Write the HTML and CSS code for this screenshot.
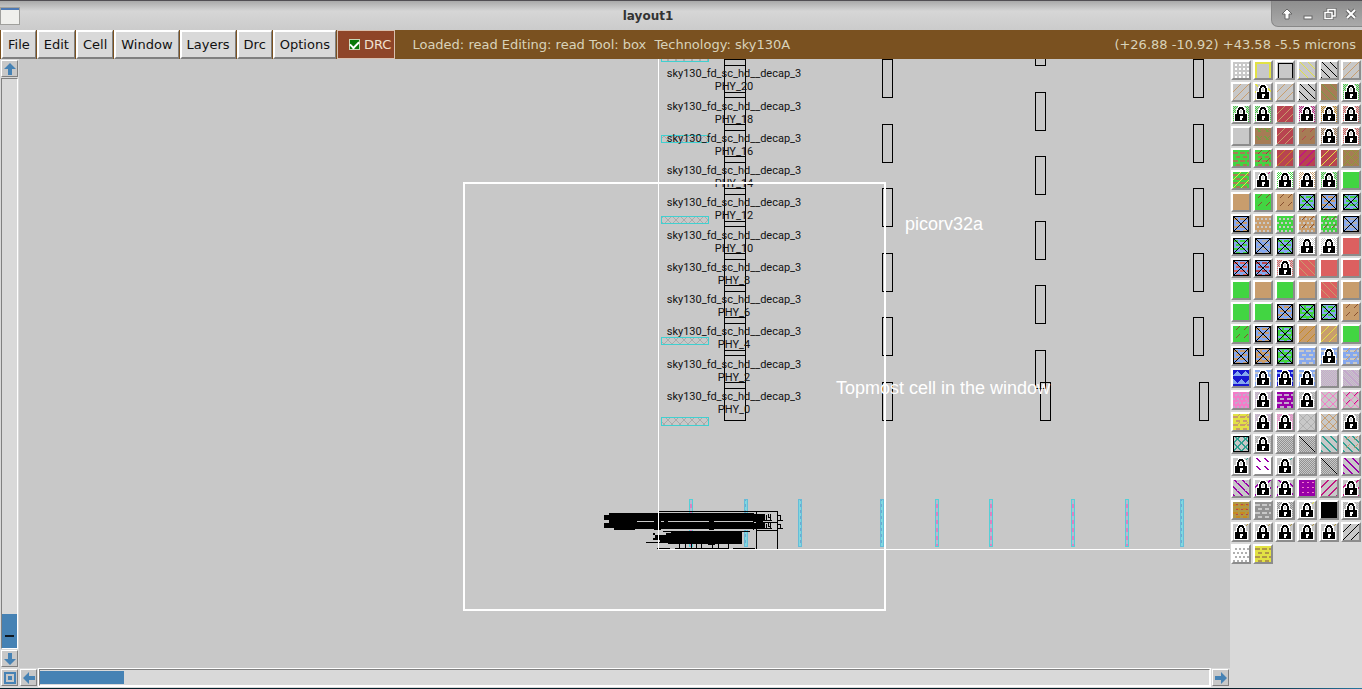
FILE: index.html
```html
<!DOCTYPE html>
<html lang="en">
<head>
<meta charset="utf-8">
<title>layout1</title>
<link rel="stylesheet" href="styles.css">
</head>
<body>
<div class="app">
  <header class="titlebar">
    <svg class="win-icon" width="20" height="18" viewBox="0 0 20 18"><rect x="0" y="0" width="20" height="18" fill="#a0a09c"/><rect x="1" y="1" width="18" height="16" fill="#f0f0ec"/><rect x="1" y="1" width="18" height="2" fill="#4d79b5"/></svg>
    <h1 class="title">layout1</h1>
    <div class="win-controls">
      <button class="win-btn" aria-label="Shade"><svg width="14" height="14" viewBox="0 0 14 14"><path d="M7 2L12 7H9V12H5V7H2Z" fill="#fff" stroke="#666"/></svg></button>
      <button class="win-btn" aria-label="Minimize"><svg width="14" height="14" viewBox="0 0 14 14"><rect x="3" y="9" width="8" height="3" fill="#fff" stroke="#666"/></svg></button>
      <button class="win-btn" aria-label="Restore"><svg width="14" height="14" viewBox="0 0 14 14" fill="none"><path d="M5 5V2.500H12V9H9M2 5.500H9V11.500H2Z" stroke="#666" stroke-width="3"/><path d="M5 5V2.500H12V9H9M2 5.500H9V11.500H2Z" stroke="#fff" stroke-width="1.500"/></svg></button>
      <button class="win-btn" aria-label="Close"><svg width="14" height="14" viewBox="0 0 14 14"><path d="M3 3L11 11M11 3L3 11" stroke="#666" stroke-width="4"/><path d="M3 3L11 11M11 3L3 11" stroke="#fff" stroke-width="2"/></svg></button>
    </div>
  </header>
  <nav class="menubar">
    <button class="menu">File</button><button class="menu">Edit</button><button class="menu">Cell</button><button class="menu">Window</button><button class="menu">Layers</button><button class="menu">Drc</button><button class="menu">Options</button>
    <label class="drc"><input class="drc-box" type="checkbox" checked>DRC</label>
    <span class="status">Loaded: read Editing: read Tool: box&nbsp; Technology: sky130A</span>
    <span class="coords">(+26.88 -10.92) +43.58 -5.5 microns</span>
  </nav>
  <div class="work">
    <div class="vscroll">
      <button class="arrow" aria-label="Scroll up"><svg width="14" height="14" viewBox="0 0 14 14"><path d="M7 1L13 7H9V13H5V7H1Z" fill="#4682b4"/></svg></button>
      <div class="vtrough"><div class="vthumb"></div></div>
      <button class="arrow" aria-label="Scroll down"><svg width="14" height="14" viewBox="0 0 14 14"><path d="M7 13L13 7H9V1H5V7H1Z" fill="#4682b4"/></svg></button>
    </div>
    <svg class="canvas" id="canvas" aria-label="Layout view"></svg>
    <div class="hscroll">
      <button class="arrow" aria-label="Zoom to fit"><svg width="14" height="14" viewBox="0 0 14 14" fill="none" stroke="#4682b4" stroke-width="2"><path d="M2 2H12V12H2Z"/><path d="M6 6H8V8H6Z"/></svg></button>
      <button class="arrow" aria-label="Scroll left"><svg width="14" height="14" viewBox="0 0 14 14"><path d="M1 7L7 1V5H13V9H7V13Z" fill="#4682b4"/></svg></button>
      <div class="htrough"><div class="hthumb"></div></div>
      <button class="arrow" aria-label="Scroll right"><svg width="14" height="14" viewBox="0 0 14 14"><path d="M13 7L7 1V5H1V9H7V13Z" fill="#4682b4"/></svg></button>
    </div>
    <aside class="palette" id="palette"></aside>
  </div>
  <div class="desktop-edge"></div>
</div>
<script src="app.js"></script>
</body>
</html>
```
FILE: styles.css
```css
* { box-sizing: border-box; }
body { margin: 0; background: #d9d9d9; }
button { margin: 0; padding: 0; font: inherit; color: inherit; }
.app {
  display: grid;
  grid-template-rows: 30px 29px 1fr 1px;
  min-height: 100vh;
  font: 13px "DejaVu Sans", sans-serif;
  color: #111;
}
.titlebar {
  display: grid;
  grid-template-columns: 25px 1fr 91px;
  align-items: center;
  border-top: 1px solid #514e53;
  background: linear-gradient(#a9a9a9, #d6d6d6 35%, #cbcbcb);
}
.win-icon { display: block; }
.title {
  margin: 0;
  text-align: center;
  font: bold 12px "DejaVu Sans", sans-serif;
  color: #333;
}
.win-controls {
  display: flex;
  align-items: center;
  align-self: start;
  justify-content: space-around;
  height: 26px;
  padding-left: 4px;
  border: 1px solid #888;
  border-width: 0 0 1px 1px;
  border-bottom-left-radius: 7px;
  background: linear-gradient(#8e8e8e, #aaa);
}
.win-btn { display: flex; border: 0; background: none; }
.menubar {
  display: flex;
  gap: 1px;
  padding-left: 1px;
  background: #7a5120;
  color: #d9d3ba;
  white-space: nowrap;
}
.menu {
  padding: 0 5px 1px;
  border: 2px solid;
  border-color: #fff #808080 #808080 #fff;
  border-right-width: 1px;
  background: #d9d9d9;
  color: #111;
}
.drc {
  display: flex;
  align-items: center;
  gap: 4px;
  padding: 0 3px 1px 11px;
  border: 1px solid #d8c0b0;
  background: #8f4528;
  color: #f0e0d0;
}
.drc-box {
  appearance: none;
  width: 11px;
  height: 11px;
  margin: 0;
  border: 1px solid #c8d8b8;
  background: #087808;
  display: grid;
  place-items: center;
}
.drc-box::before {
  content: "";
  width: 7px;
  height: 4px;
  border: solid #fff;
  border-width: 0 0 2px 2px;
  transform: rotate(-45deg);
}
.status { align-self: center; padding: 0 0 1px 16px; }
.coords { align-self: center; margin-left: auto; padding: 0 6px 1px 0; }
.work {
  display: grid;
  grid-template-columns: 19px 1fr 132px;
  grid-template-rows: 1fr 20px;
}
.vscroll { display: flex; flex-direction: column; gap: 1px; padding: 1px; }
.arrow {
  display: grid;
  place-items: center;
  flex: none;
  width: 17px;
  height: 17px;
  border: 1px solid;
  border-color: #fff #808080 #808080 #fff;
  background: #c8c8c8;
}
.vtrough {
  flex: 1;
  display: flex;
  flex-direction: column;
  justify-content: flex-end;
  border: 1px solid;
  border-color: #808080 #fff #fff #808080;
}
.vthumb {
  height: 6%;
  background: linear-gradient(#101820, #101820) 50% 67% / 9px 2px no-repeat #4682b4;
}
.canvas { grid-area: 1 / 2; width: 100%; height: 100%; background: #c8c8c8; }
.hscroll { grid-area: 2 / 1 / 3 / 3; display: flex; gap: 2px; padding: 1px; }
.htrough {
  flex: 1;
  height: 17px;
  padding-top: 1px;
  border: 1px solid;
  border-color: #808080 #fff #fff #808080;
  outline: 1px solid #fff;
}
.hthumb { width: 84px; height: 13px; background: #4682b4; }
.palette {
  grid-area: 1 / 3 / 3 / 4;
  display: grid;
  grid-template-columns: repeat(6, 20px);
  grid-auto-rows: 20px;
  gap: 2px;
  padding: 1px;
}
.swatch {
  display: grid;
  place-items: center;
  border: 2px solid;
  border-color: #fff #8c8c8c #8c8c8c #fff;
  background: #d0d0d0;
}
.swatch svg { display: block; }
.cell-name { font: 11px Roboto, sans-serif; fill: #111; text-anchor: middle; }
.note { font: 18px "Liberation Sans", Arial, sans-serif; fill: #fff; }
.cell { fill: none; stroke: #000; }
.strap-h { fill: url(#hatch); stroke: #40d0d0; }
.strap-pink { fill: url(#pins); stroke: #55d0d8; }
.strap-blue { fill: url(#bluepins); stroke: #66bcd8; }
.desktop-edge { background: linear-gradient(90deg, #06222c, #061820 90%, #2878a0); }
```
FILE: app.js
```js
// Layout drawing, in window coordinates shifted to the canvas origin.
const straps = [691, 746, 800, 882, 937, 991, 1073, 1127, 1182];
const pinkStraps = [691, 937, 991, 1073, 1127];
let out = `<defs>
<pattern id="hatch" width="8" height="8" patternUnits="userSpaceOnUse"><path d="M0 0L8 8M8 0L0 8" stroke="#aaa"/></pattern>
<pattern id="pins" width="4" height="8" patternUnits="userSpaceOnUse"><rect width="4" height="8" fill="#b8b8d0"/><rect width="4" height="4" fill="#e080c0"/></pattern>
<pattern id="bluepins" width="4" height="6" patternUnits="userSpaceOnUse"><rect width="4" height="6" fill="#80d8e0"/><rect width="2" height="3" fill="#70a8d0"/></pattern>
</defs><g transform="translate(-19 -59)" shape-rendering="crispEdges">`;
for (const y of [54, 135, 216, 337, 417])
  out += `<rect class="strap-h" x="661.5" y="${y + 0.5}" width="47" height="${y === 417 ? 8 : 7}"/>`;
for (const x of straps)
  out += `<rect class="${pinkStraps.includes(x) ? "strap-pink" : "strap-blue"}" x="${x - 1.5}" y="499.5" width="3" height="47"/>`;
const cell = (x, y, w) => `<rect class="cell" x="${x + 0.5}" y="${Math.round(y) + 0.5}" width="${w}" height="38"/>`;
const pitch = 32.27;
for (let i = 0; i < 12; i++) {
  const y = 382 - i * pitch;
  out += cell(724, y, 21);
  if (i < 11)
    out += `<text class="cell-name" x="734" y="${Math.round(y + 18)}">sky130_fd_sc_hd__decap_3</text><text class="cell-name" x="734" y="${Math.round(y + 31)}">PHY_${i * 2}</text>`;
  if (i % 2) out += cell(1035, y, 10);
  else out += cell(882, y, 10) + (i ? cell(1193, y, 10) : cell(1040, y, 10) + cell(1199, y, 9));
}
// Dense block of overlapping cells at the lower left corner.
out += `<path d="M609 513H754V514H765V521H763V522H754V523H765V529H754V530H614V528H609V528H604V523H609V520H604V515H609ZM671 532H676V531H679V532H742V544H715V545H708V544H668V542H660V540H653V538H655V535H653V533H655V535H666V533H671Z"/>
<path d="M658 511.500H777.500V549M756.500 512V549M756 522.500H777M756 530.500H777M663 531.500H750M646 542.500H668M657 548.500H670M675 548.500H729M733 548.500H755M679.500 543V548M685.500 543V548M691.500 543V548M696.500 543V548M701.500 543V548M712.500 543V548M718.500 543V548M728.500 543V548" fill="none" stroke="#000"/>
<path d="M637 521.500H654M661 521.500H664M668 521.500H709M714 521.500H753M635 529.500H654M661 529.500H709M714 529.500H753" fill="none" stroke="#c8c8c8"/>
<path d="M757 514V520M760 514V520M757 523V528M760 523V528M766 515V520H771M768 514V517H771M766 524V528H771M768 523V526H771M764 520.500H772M764 528.500H772M770.500 514V520M770.500 523V528M778 515H780.500V520M778 520.500H783M778 524H780.500V528M778 528.500H783" fill="none" stroke="#000"/>
<path d="M658.500 59V549" stroke="#fff"/><path d="M658 549.500H5000" stroke="#fff"/>
<rect x="464" y="183" width="421" height="427" fill="none" stroke="#fff" stroke-width="2"/>
<text class="note" x="905" y="230">picorv32a</text><text class="note" x="836" y="394">Topmost cell in the window</text></g>`;
document.getElementById("canvas").innerHTML = out;

// Layer palette. Each entry is "base ops", an op being a pattern key and a colour key.
const colours = {
  n: "#c8c8c8", g: "#42d542", t: "#c89d6d", r: "#b84450", R: "#dc6060", b: "#86a8ee", w: "#ffffff",
  y: "#e2e244", k: "#000000", T: "#a67c55", o: "#8c9c38", O: "#c88a20", p: "#9800a8", P: "#f47cc8",
  M: "#c01880", c: "#30a090", d: "#929292", B: "#1818d0", l: "#c4a8cc", m: "#885030", a: "#b09848",
  s: "#b0b0b0", u: "#74a044"
};
const rows = [
  "n .w|n fy|n fk|n \\y|n \\k|n /t",
  "n /t|n Yy L|n /t|n \\k|T \\u|n #g L",
  "n #g L|n #g L|r /t|n #M L|n #O L|n #R L",
  "n|T Vu vu|r /t|T vr|n #T L|n #R L",
  "g -T|g -T vm|r /O|r /M|r /y|T \\o /o",
  "g -T /y|n vM L|g #w L|t #w L|n #g L|g",
  "t|g vm|t vm|b -g X|b -t X|b -g vc X",
  "b -t X|t :n|g :n|t :n vm|g :n vm|b -s X",
  "b -g X|b -s X|b -g X|n #w L|n #w L|R",
  "b -R X|b -r X|n #R L|R \\t|R|R",
  "g|t|g|t|R \\t|t",
  "g|g|b -t X|g -b X|b -g X|t vm",
  "g vm|b -t X|g -b X|t /O|t /y|g",
  "b -t X|t -b X|g -b X|b -n|b -n L|b -n vt",
  "b TB|b -n L|B -b L|b -n L|n #l|n #l \\l",
  "P vl :l|n #l L|p -l|n #s L|n oP|n oP vM",
  "y -t vt|n #l L|n #P L|n os|n ot|n #s L",
  "n /c \\c Fk|n #s L|n #P #d|n #P #d Dk|n \\c|n \\c vt",
  "n vc L|w Vp|n vc L|n #d|n #d Dk|n \\p",
  "n \\p vl|n /p L|n \\p L|p iP|n /M|n /M L",
  "a -O ir|d -n|n #d L|n vy L|k|n #s L",
  "n va L|n va L|n va L|n va L|n va L|n /k",
  "w :s|y -a"
];
const line = (d, c, w = 1, extra = "") => `<path d="${d}" stroke="${c}" stroke-width="${w}" fill="none" ${extra}/>`;
// Draws one-pixel squares wherever the test holds.
const dots = (test, c) => {
  let d = "";
  for (let y = 0; y < 16; y++) for (let x = 0; x < 16; x++) if (test(x, y)) d += `M${x} ${y}h1v1h-1z`;
  return `<path d="${d}" fill="${c}"/>`;
};
const thick = c => c === colours.c || c === colours.p || c === colours.M;
const ops = {
  "/": c => dots((x, y) => (x + y) % 8 === 7 || (thick(c) && (x + y) % 8 === 6), c),
  "\\": c => dots((x, y) => (x - y + 16) % 8 === 1 || (thick(c) && (x - y + 16) % 8 === 2), c),
  D: c => dots((x, y) => x === y, c),
  v: c => dots((x, y) => (x + y) % 8 === 6 && y % 8 < 4, c),
  V: c => dots((x, y) => [1, 2].includes((x - y + 16) % 8) && y % 8 < 4, c),
  ".": c => line("M2 3H16M2 7H16M2 11H16M2 15H16", c, 2, 'stroke-dasharray="2 2"'),
  ":": c => line("M2 3H16M0 7H16M2 11H16M0 15H16", c, 2, 'stroke-dasharray="2 2"'),
  i: c => dots((x, y) => y % 5 === 2 && x % 5 > 2, c),
  "-": c => dots((x, y) => (y % 8 > 1 && y % 8 < 4 && x % 7 < 5) || (y % 8 > 5 && (x + 4) % 7 < 4), c),
  "#": c => dots((x, y) => (x + y) % 2 === 0, c),
  T: c => dots((x, y) => y % 8 > 5 || Math.abs((x + (y < 8 ? 4 : 0)) % 8 - 4) < 5 - y % 8, c),
  Y: c => dots((x, y) => (x - y + 16) % 8 < 2 && (x < 3 || x > 12), c),
  f: c => line("M1 16V1H15V16", c, c === colours.k ? 1 : 2),
  F: c => line("M.5 .5H15.500V15.500H.5Z", c, 1),
  o: c => dots((x, y) => (x + y) % 8 === 7 || (x - y + 16) % 8 === 0, c),
  X: () => line("M.5 .5H15.500V15.500H.5Z", "#000") + dots((x, y) => x === y || x + y === 15, "#000"),
  L: () => `<path d="M3 7V3L5 1V0H11V1L13 3V7H15V16H1V7Z" fill="#fff"/><path d="M4 8V4H5V2H6V1H10V2H11V4H12V8H10V4H9V3H7V4H6V8ZM2 8H14V15H2ZM7 10V12H7V14H9V12H10V10Z" fill="#000" fill-rule="evenodd"/><path d="M7 4H9V7H7Z" fill="#c8c8c8"/>`
};
const palette = document.getElementById("palette");
rows.forEach((row, r) => row.split("|").forEach((spec, i) => {
  const [base, ...list] = spec.split(" ");
  const body = list.map(s => ops[s[0]](colours[s[1]])).join("");
  const b = document.createElement("button");
  b.className = "swatch";
  b.setAttribute("aria-label", `Layer ${r * 6 + i + 1}`);
  b.innerHTML = `<svg width="16" height="16" viewBox="0 0 16 16" shape-rendering="crispEdges"><rect width="16" height="16" fill="${colours[base]}"/>${body}</svg>`;
  palette.append(b);
}));
```
